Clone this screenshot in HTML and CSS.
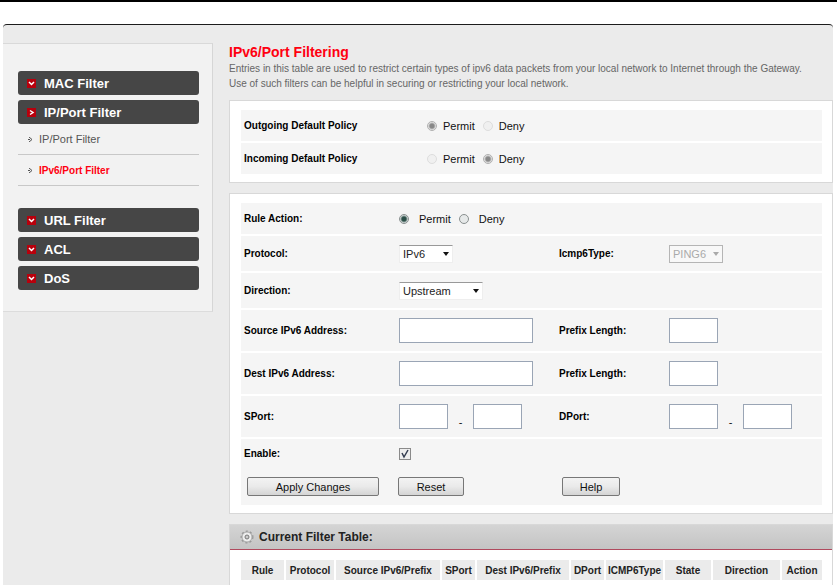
FILE: index.html
```html
<!DOCTYPE html>
<html lang="en">
<head>
  <meta charset="UTF-8">
  <meta name="viewport" content="width=device-width, initial-scale=1.0">
  <title>IPv6/Port Filtering</title>
  <link rel="stylesheet" href="styles.css">
</head>
<body>

<div class="page">
  <!-- Side menu -->
  <nav class="sidebar">
    <a class="menu-item" href="#">
      <svg class="menu-icon" viewBox="0 0 9 9"><path d="M2 3l2.500 2.500L7 3"/></svg>
      MAC Filter
    </a>
    <a class="menu-item" href="#">
      <svg class="menu-icon" viewBox="0 0 9 9"><path d="M3 2.500l3 2l-3 2"/></svg>
      IP/Port Filter
    </a>
    <ul class="submenu">
      <li><a href="#"><svg class="sub-icon" viewBox="0 0 5 5"><path d="M1 0l3 2.500L1 5M0 2.500h2"/></svg>IP/Port Filter</a></li>
      <li><a class="active" href="#"><svg class="sub-icon" viewBox="0 0 5 5"><path d="M1 0l3 2.500L1 5M0 2.500h2"/></svg>IPv6/Port Filter</a></li>
    </ul>
    <a class="menu-item" href="#">
      <svg class="menu-icon" viewBox="0 0 9 9"><path d="M2 3l2.500 2.500L7 3"/></svg>
      URL Filter
    </a>
    <a class="menu-item" href="#">
      <svg class="menu-icon" viewBox="0 0 9 9"><path d="M2 3l2.500 2.500L7 3"/></svg>
      ACL
    </a>
    <a class="menu-item" href="#">
      <svg class="menu-icon" viewBox="0 0 9 9"><path d="M2 3l2.500 2.500L7 3"/></svg>
      DoS
    </a>
  </nav>

  <main class="content">
    <h1>IPv6/Port Filtering</h1>
    <p class="intro">Entries in this table are used to restrict certain types of ipv6 data packets from your local network to Internet through the Gateway.<br>Use of such filters can be helpful in securing or restricting your local network.</p>

    <!-- Default policy -->
    <form class="panel">
      <div class="row policy-row">
        <span class="label">Outgoing Default Policy</span>
        <div class="radios">
          <label><input type="radio" name="outgoing" checked disabled>Permit</label>
          <label><input type="radio" name="outgoing" disabled>Deny</label>
        </div>
      </div>
      <div class="row policy-row">
        <span class="label">Incoming Default Policy</span>
        <div class="radios">
          <label><input type="radio" name="incoming" disabled>Permit</label>
          <label><input type="radio" name="incoming" checked disabled>Deny</label>
        </div>
      </div>
    </form>

    <!-- Rule form -->
    <form class="panel">
      <div class="row">
        <span class="label">Rule Action:</span>
        <div class="radios wide">
          <label><input type="radio" name="action" checked>Permit</label>
          <label><input type="radio" name="action">Deny</label>
        </div>
      </div>
      <div class="row select-row">
        <label class="label" for="protocol">Protocol:</label>
        <div class="select small">
          <select id="protocol"><option>IPv6</option><option>ICMP6</option><option>TCP</option><option>UDP</option></select>
        </div>
        <label class="label" for="icmp">Icmp6Type:</label>
        <div class="select small disabled">
          <select id="icmp" disabled><option>PING6</option></select>
        </div>
      </div>
      <div class="row select-row">
        <label class="label" for="direction">Direction:</label>
        <div class="select">
          <select id="direction"><option>Upstream</option><option>Downstream</option></select>
        </div>
      </div>
      <div class="row input-row">
        <label class="label" for="source">Source IPv6 Address:</label>
        <div><input class="address" type="text" id="source"></div>
        <label class="label" for="source-prefix">Prefix Length:</label>
        <div><input class="short" type="text" id="source-prefix"></div>
      </div>
      <div class="row input-row">
        <label class="label" for="dest">Dest IPv6 Address:</label>
        <div><input class="address" type="text" id="dest"></div>
        <label class="label" for="dest-prefix">Prefix Length:</label>
        <div><input class="short" type="text" id="dest-prefix"></div>
      </div>
      <div class="row input-row">
        <label class="label" for="sport">SPort:</label>
        <div class="range">
          <input class="short" type="text" id="sport"><span>-</span><input class="short" type="text" aria-label="SPort end">
        </div>
        <label class="label" for="dport">DPort:</label>
        <div class="range">
          <input class="short" type="text" id="dport"><span>-</span><input class="short" type="text" aria-label="DPort end">
        </div>
      </div>
      <div class="row enable-row">
        <label class="label" for="enable">Enable:</label>
        <div class="tick">
          <input type="checkbox" id="enable" checked>
          <svg viewBox="0 0 12 12"><path d="M3 5l2 4l4-7"/></svg>
        </div>
      </div>
      <div class="row buttons">
        <button class="apply" type="button">Apply Changes</button>
        <button class="reset" type="reset">Reset</button>
        <button class="help" type="button">Help</button>
      </div>
    </form>

    <!-- Filter table -->
    <section class="table-panel">
      <h2>
        <svg class="gear" viewBox="0 0 14 14">
          <circle class="teeth" cx="7" cy="7" r="5.500"/>
          <circle class="wheel" cx="7" cy="7" r="5"/>
          <circle class="hub" cx="7" cy="7" r="2"/>
        </svg>
        Current Filter Table:
      </h2>
      <table>
        <colgroup>
          <col class="w-rule"><col class="w-protocol"><col class="w-source"><col class="w-port"><col class="w-dest">
          <col class="w-port"><col class="w-icmp"><col class="w-state"><col class="w-direction"><col class="w-action">
        </colgroup>
        <thead>
          <tr>
            <th>Rule</th>
            <th>Protocol</th>
            <th>Source IPv6/Prefix</th>
            <th>SPort</th>
            <th>Dest IPv6/Prefix</th>
            <th>DPort</th>
            <th>ICMP6Type</th>
            <th>State</th>
            <th>Direction</th>
            <th>Action</th>
          </tr>
        </thead>
      </table>
    </section>
  </main>
</div>

</body>
</html>
```
FILE: styles.css
```css
* {box-sizing: border-box;}

body {
  margin: 0;
  border-top: 2px solid #000;
  background-color: #fff;
  font-family: "Liberation Sans", Arial, sans-serif;
  font-size: 11px;
  color: #111;
}

a {text-decoration: none; color: inherit;}

.page {
  display: flex;
  align-items: flex-start;
  gap: 16px;
  margin: 22px 4px 0 3px;
  min-height: calc(100vh - 24px);
  border-top: 1px solid #1c1c1c;
  border-radius: 4px 4px 0 0;
  background-color: #ebebeb;
}

/* Side menu */
.sidebar {
  flex: none;
  width: 210px;
  margin-top: 18px;
  padding: 27px 13px 21px 15px;
  border-top: 1px solid #d9d9d9;
  border-right: 1px solid #d6d6d6;
  border-bottom: 1px solid #dcdcdc;
  background-color: #f2f2f2;
}

.menu-item {
  display: flex;
  align-items: center;
  gap: 8px;
  height: 24px;
  margin-bottom: 5px;
  padding-left: 9px;
  border-radius: 3px;
  background-color: #464646;
  color: #fff;
  font-size: 13px;
  font-weight: bold;
}

.menu-item:last-child {margin-bottom: 0;}

.menu-icon {
  width: 9px;
  height: 9px;
  background-color: #b8000c;
}

.menu-icon path {fill: none; stroke: #fff; stroke-width: 1.5;}

.submenu {
  list-style: none;
  margin: -5px 0 22px;
  padding: 0;
}

.submenu a {
  display: flex;
  align-items: center;
  gap: 6px;
  height: 31px;
  padding-left: 10px;
  border-bottom: 1px solid #c8c8c8;
  color: #555;
}

.submenu .active {
  color: #ff0010;
  font-size: 10px;
  font-weight: bold;
}

.sub-icon {width: 5px; height: 5px;}
.sub-icon path {fill: none; stroke: #555;}

/* Main column */
.content {
  flex: 1;
  min-width: 0;
}

h1 {
  margin: 19px 0 1px;
  color: #ff0010;
  font-size: 14px;
  line-height: 16px;
}

.intro {
  margin: 0 0 9px;
  color: #666;
  font-size: 10px;
  line-height: 15px;
}

.panel {
  margin-bottom: 10px;
  padding: 9px 10px 8px 11px;
  border: 1px solid #d8d8d8;
  background-color: #fff;
}

.row {
  display: grid;
  grid-template-columns: 155px 160px 110px 1fr;
  align-items: center;
  min-height: 31px;
  margin-bottom: 2px;
  padding-left: 3px;
  background-color: #f5f5f5;
}

.row:last-child {margin-bottom: 0;}
.policy-row {grid-template-columns: 183px 1fr;}
.select-row {min-height: 35px;}
.input-row {min-height: 41px;}
.enable-row {min-height: 29px; margin-bottom: 0;}

.label {
  color: #000;
  font-size: 10px;
  font-weight: bold;
}

/* Radio buttons */
.radios {display: flex; gap: 8px;}
.radios label {display: flex; align-items: center; gap: 6px;}
.radios.wide label {gap: 10px;}

input[type="radio"] {
  appearance: none;
  width: 10px;
  height: 10px;
  margin: 0;
  border: 1px solid #8a9090;
  border-radius: 50%;
  background-color: #e6e9e9;
}

input[type="radio"]:checked {background-image: radial-gradient(circle, #2c4f48 0, #2c4f48 2px, #e6e9e9 4px);}
input[type="radio"]:disabled {border-color: #ddd; background-color: #f0f0f0;}

input[type="radio"]:checked:disabled {
  border-color: #b0b0b0;
  background-image: radial-gradient(circle, #888 0, #888 2px, #eee 4px);
}

/* Select boxes */
.select {
  position: relative;
  width: 84px;
}

.select.small {width: 54px;}

.select::after {
  content: "";
  position: absolute;
  top: 7px;
  right: 4px;
  border: 3px solid transparent;
  border-top: 4px solid #111;
  pointer-events: none;
}

select {
  appearance: none;
  width: 100%;
  height: 18px;
  margin: 0;
  padding: 0 3px;
  border: 1px solid #eee;
  border-top-color: #999;
  border-radius: 0;
  background-color: #fff;
  color: #222;
  font-family: inherit;
  font-size: 11px;
}

.select.disabled::after {border-top-color: #aaa;}

select:disabled {
  border-color: #b5b5b5;
  background-color: #f8f8f8;
  color: #aaa;
  opacity: 1;
}

/* Text boxes */
input[type="text"] {
  display: block;
  height: 25px;
  margin: 0;
  padding: 2px 4px;
  border: 1px solid #9aa5b5;
  background-color: #fff;
  font-family: inherit;
  font-size: 11px;
}

.address {width: 134px;}
.short {width: 49px;}

.range {display: flex;}

.range span {
  width: 25px;
  padding-top: 12px;
  text-align: center;
}

/* Check box */
.tick {position: relative; height: 12px;}

.tick input {
  appearance: none;
  display: block;
  width: 12px;
  height: 12px;
  margin: 0;
  border: 1px solid #8a8a8a;
  background-color: #eee;
}

.tick svg {
  position: absolute;
  top: 0;
  left: 0;
  width: 12px;
  height: 12px;
  pointer-events: none;
}

.tick path {fill: none; stroke: #333c50; stroke-width: 1.5;}
.tick input:not(:checked) + svg {display: none;}

/* Buttons */
.buttons {
  grid-template-columns: 151px 164px 1fr;
  min-height: 37px;
  padding-left: 6px;
}

button {
  height: 19px;
  padding: 0;
  border: 1px solid #777;
  border-radius: 2px;
  background-image: linear-gradient(#f3f3f3 0, #eaeaea 50%, #d4d4d4 100%);
  color: #111;
  font-family: inherit;
  font-size: 11px;
}

.apply {width: 132px;}
.reset {width: 66px;}
.help {width: 58px;}

/* Filter table */
.table-panel {
  min-height: 62px;
  border: 1px solid #d8d8d8;
  border-bottom: none;
  background-color: #fff;
}

h2 {
  display: flex;
  align-items: center;
  gap: 5px;
  height: 25px;
  margin: 0;
  padding-left: 10px;
  border-bottom: 1px solid #b04a5e;
  background-image: linear-gradient(#d4d4d4, #c4c4c4);
  background-clip: padding-box;
  color: #222;
  font-size: 12px;
}

.gear {width: 14px; height: 14px;}
.teeth {fill: none; stroke: #999; stroke-width: 2; stroke-dasharray: 2 2;}
.wheel {fill: #eee; stroke: #aaa;}
.hub {fill: #ccc; stroke: #777;}

table {
  width: calc(100% - 17px);
  margin: 8px 8px 0 9px;
  border-spacing: 2px;
  table-layout: fixed;
}

th {
  height: 20px;
  padding: 0;
  background-color: #ebebeb;
  color: #222;
  font-size: 10px;
  white-space: nowrap;
}

.w-rule {width: 43px;}
.w-protocol {width: 48px;}
.w-source {width: 104px;}
.w-port {width: 33px;}
.w-dest {width: 92px;}
.w-icmp {width: 57px;}
.w-state {width: 46px;}
.w-direction {width: 67px;}
.w-action {width: 40px;}
```
